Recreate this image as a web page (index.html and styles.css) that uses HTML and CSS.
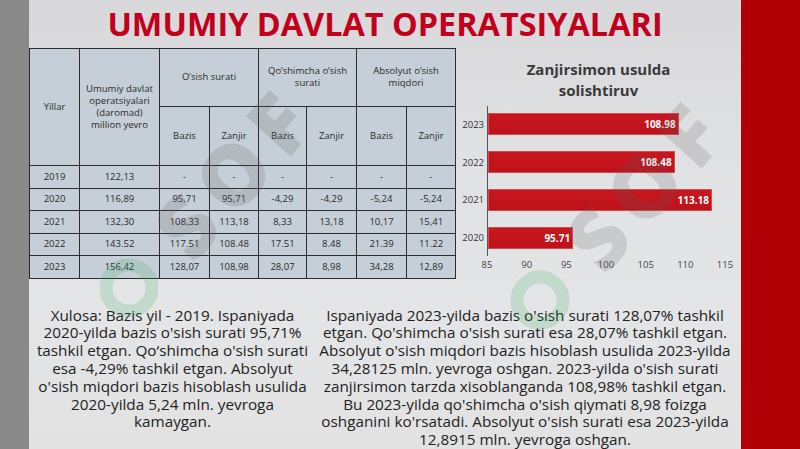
FILE: index.html
```html
<!DOCTYPE html>
<html lang="uz">
<head>
<meta charset="utf-8">
<title>Umumiy davlat operatsiyalari</title>
<link rel="stylesheet" href="styles.css">
</head>
<body>
<div class="slide">
  <div class="strip-left"></div>
  <main class="main">
    <h1 class="title">UMUMIY DAVLAT OPERATSIYALARI</h1>
    <div class="content">
      <table class="tbl">
        <colgroup>
          <col class="c-year"><col class="c-total">
          <col class="c-50"><col class="c-49"><col class="c-48"><col class="c-50"><col class="c-50"><col class="c-49">
        </colgroup>
        <thead>
          <tr class="h1">
            <th rowspan="2">Yillar</th>
            <th rowspan="2">Umumiy davlat<br>operatsiyalari<br>(daromad)<br>million yevro</th>
            <th colspan="2">O‘sish surati</th>
            <th colspan="2">Qo‘shimcha o‘sish<br>surati</th>
            <th colspan="2">Absolyut o‘sish<br>miqdori</th>
          </tr>
          <tr class="h2">
            <th>Bazis</th><th>Zanjir</th><th>Bazis</th><th>Zanjir</th><th>Bazis</th><th>Zanjir</th>
          </tr>
        </thead>
        <tbody>
          <tr class="r-a"><td>2019</td><td>122,13</td><td>-</td><td>-</td><td>-</td><td>-</td><td>-</td><td>-</td></tr>
          <tr class="r-b"><td>2020</td><td>116,89</td><td>95,71</td><td>95,71</td><td>-4,29</td><td>-4,29</td><td>-5,24</td><td>-5,24</td></tr>
          <tr class="r-a"><td>2021</td><td>132,30</td><td>108,33</td><td>113,18</td><td>8,33</td><td>13,18</td><td>10,17</td><td>15,41</td></tr>
          <tr class="r-b"><td>2022</td><td>143.52</td><td>117.51</td><td>108.48</td><td>17.51</td><td>8.48</td><td>21.39</td><td>11.22</td></tr>
          <tr class="r-a"><td>2023</td><td>156,42</td><td>128,07</td><td>108,98</td><td>28,07</td><td>8,98</td><td>34,28</td><td>12,89</td></tr>
        </tbody>
      </table>
      <section class="chart">
        <h2 class="chart-title">Zanjirsimon usulda<br>solishtiruv</h2>
        <div class="plot">
          <div class="ylabels">
            <div class="ylabel">2023</div>
            <div class="ylabel">2022</div>
            <div class="ylabel">2021</div>
            <div class="ylabel">2020</div>
          </div>
          <div class="bars">
            <div class="bar-row"><div class="bar" style="width:190.6px">108.98</div></div>
            <div class="bar-row"><div class="bar" style="width:186.6px">108.48</div></div>
            <div class="bar-row"><div class="bar" style="width:224px">113.18</div></div>
            <div class="bar-row"><div class="bar" style="width:85.1px">95.71</div></div>
          </div>
        </div>
        <div class="xticks">
          <span>85</span><span>90</span><span>95</span><span>100</span><span>105</span><span>110</span><span>115</span>
        </div>
      </section>
    </div>
    <div class="notes">
      <p class="note note-left">Xulosa: Bazis yil - 2019. Ispaniyada<br>2020-yilda bazis o'sish surati 95,71%<br>tashkil etgan. Qo‘shimcha o'sish surati<br>esa -4,29% tashkil etgan. Absolyut<br>o'sish miqdori bazis hisoblash usulida<br>2020-yilda 5,24 mln. yevroga<br>kamaygan.</p>
      <p class="note note-right">Ispaniyada 2023-yilda bazis o'sish surati 128,07% tashkil<br>etgan. Qo'shimcha o'sish surati esa 28,07% tashkil etgan.<br>Absolyut o'sish miqdori bazis hisoblash usulida 2023-yilda<br>34,28125 mln. yevroga oshgan. 2023-yilda o'sish surati<br>zanjirsimon tarzda xisoblanganda 108,98% tashkil etgan.<br>Bu 2023-yilda qo'shimcha o'sish qiymati 8,98 foizga<br>oshganini ko'rsatadi. Absolyut o'sish surati esa 2023-yilda<br>12,8915 mln. yevroga oshgan.</p>
    </div>
    <div class="wm wm-left" aria-hidden="true">
      <svg class="wm-ring" width="60" height="70" viewBox="0 0 60 70"><circle cx="30" cy="35" r="23" fill="none" stroke="#2fae55" stroke-width="13"/></svg>
      <span class="wm-text">SOF</span>
    </div>
    <div class="wm wm-right" aria-hidden="true">
      <svg class="wm-ring" width="60" height="70" viewBox="0 0 60 70"><circle cx="30" cy="35" r="23" fill="none" stroke="#2fae55" stroke-width="13"/></svg>
      <span class="wm-text">SOF</span>
    </div>
  </main>
  <div class="strip-right"></div>
</div>
</body>
</html>
```

FILE: styles.css
```css
* { box-sizing: border-box; margin: 0; padding: 0; }
html, body { width: 800px; height: 449px; overflow: hidden; }
body { font-family: "Open Sans", "Noto Sans", sans-serif; color: #222; background: #e0e0e0; }

.slide { display: flex; width: 800px; height: 449px; }
.strip-left { flex: none; width: 29px; background: #8a8a8a; }
.strip-right { flex: 1; background: #b00006; position: relative; z-index: 2; }
.main {
  position: relative;
  flex: none;
  width: 712px;
  display: flex;
  flex-direction: column;
  background: linear-gradient(180deg, #d8d8da 0%, #e1e2e4 40%, #e4e5e7 70%, #e2e2e2 100%);
  overflow: hidden;
}

.title {
  height: 55px;
  font-size: 32.4px;
  line-height: 46px;
  font-weight: 700;
  color: #c2001c;
  text-align: center;
}

.content { display: flex; height: 232px; }

.tbl {
  flex: none;
  width: 426px;
  border-collapse: collapse;
  table-layout: fixed;
  background: #c6cfd7;
  font-size: 9.5px;
  color: #2a2a2a;
}
.c-year { width: 50px; }
.c-total { width: 80px; }
.c-50 { width: 50px; }
.c-49 { width: 49px; }
.c-48 { width: 48px; }
.tbl th, .tbl td {
  border: 1px solid #2b2b2b;
  text-align: center;
  vertical-align: middle;
  font-weight: 400;
  line-height: 12px;
  padding: 0 2px;
}
.tbl .h1 { height: 58px; }
.tbl .h2 { height: 59px; }
.tbl .r-a { height: 23px; }
.tbl .r-b { height: 22px; }

.chart { flex: 1; padding-top: 11px; }
.chart-title {
  text-align: center;
  font-size: 15px;
  line-height: 21px;
  font-weight: 700;
  color: #3a3a3a;
}
.plot { display: flex; margin: 5px 0 0 3px; }
.ylabels { width: 28px; display: flex; flex-direction: column; }
.ylabel {
  height: 37.7px;
  display: flex;
  align-items: center;
  justify-content: flex-end;
  padding-right: 3px;
  font-size: 9.5px;
  color: #333;
}
.bars { width: 239px; border-left: 1px solid #555; }
.bar-row { height: 37.7px; display: flex; align-items: center; }
.bar {
  height: 22px;
  background: linear-gradient(180deg, #c8161e 0%, #bd121a 100%);
  box-shadow: inset 0 0 0 1px #d84a4e;
  color: #fff;
  font-size: 10px;
  font-weight: 700;
  display: flex;
  align-items: center;
  justify-content: flex-end;
  padding-right: 3px;
}
.xticks {
  display: flex;
  justify-content: space-between;
  width: 238px;
  margin: 2px 0 0 31px;
  font-size: 9.5px;
  line-height: 14px;
  color: #444;
}
.xticks span { width: 0; display: flex; justify-content: center; white-space: nowrap; }

.notes { display: flex; margin-top: 28px; }
.note {
  font-size: 15.3px;
  line-height: 17.8px;
  text-align: center;
  color: #222;
  white-space: nowrap;
}
.note-left { flex: none; width: 287px; }
.note-right { flex: 1; padding-right: 7px; }

.wm {
  position: absolute;
  display: flex;
  align-items: center;
  gap: 30px;
  transform: rotate(-48deg);
  transform-origin: 30px 50%;
  pointer-events: none;
  opacity: 0.18;
}
.wm-left { left: 70px; top: 253px; }
.wm-right { left: 481px; top: 265px; }
.wm-ring { flex: none; display: block; }
.wm-text {
  font-family: "Open Sans", sans-serif;
  font-size: 84px;
  font-weight: 800;
  line-height: 70px;
  letter-spacing: 12px;
  color: #5e5e5e;
}
```
